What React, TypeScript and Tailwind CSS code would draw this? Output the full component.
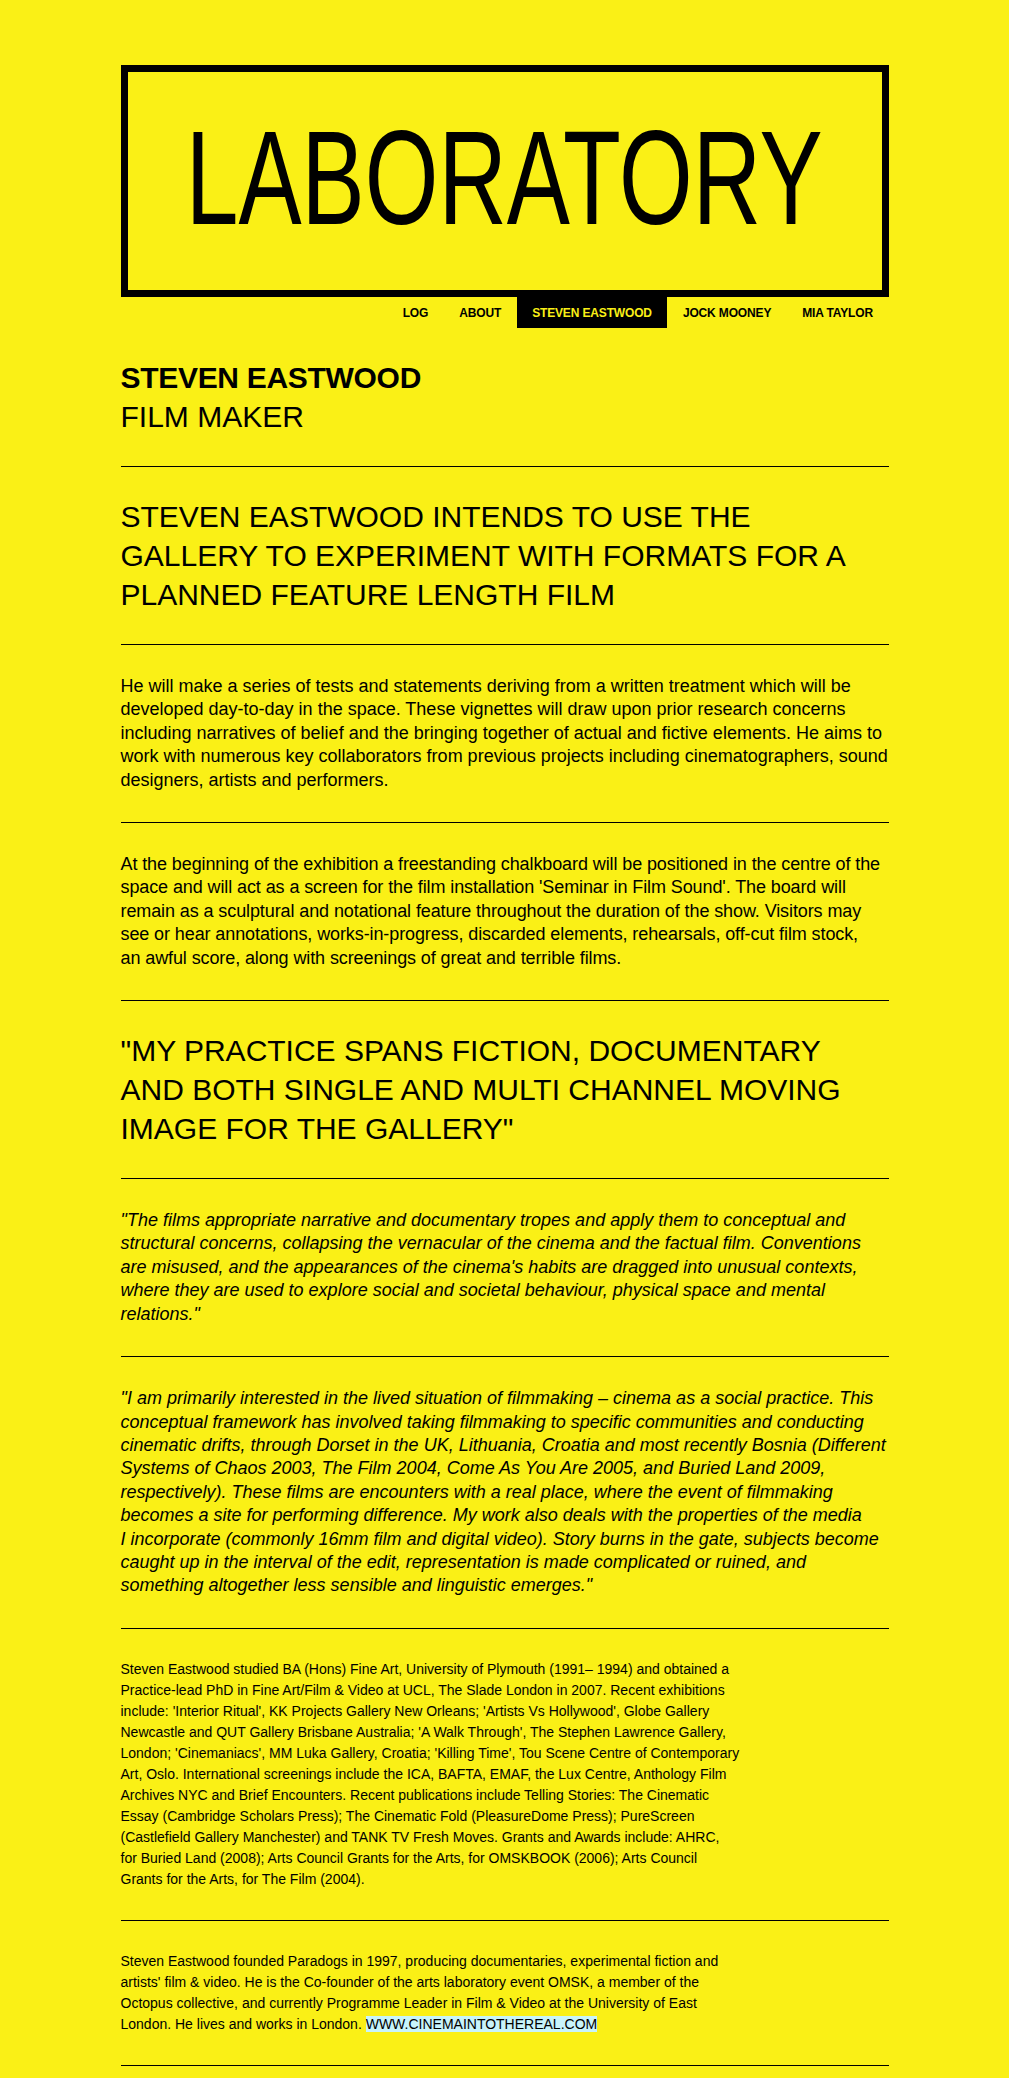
const navItems = ["LOG", "ABOUT", "STEVEN EASTWOOD", "JOCK MOONEY", "MIA TAYLOR"];

const Divider = () => <div className="w-full h-px bg-black" />;

const App = () => {
  return (
    <div className="min-h-[2078px] w-full bg-[#faf016] text-black font-['Liberation_Sans',Arial,sans-serif] pt-[65px] pb-[11px]">
      <div className="w-[768px] mx-auto flex flex-col">
        {/* logo box */}
        <div className="h-[232px] border-[7px] border-black flex items-center justify-center overflow-visible">
          <span className="inline-block text-[133px] leading-none whitespace-nowrap scale-x-[0.712] mt-[-6px]">
            LABORATORY
          </span>
        </div>

        <nav className="flex justify-end">
          {navItems.map((item) => (
            <a
              key={item}
              className={
                item === "STEVEN EASTWOOD"
                  ? "h-[31px] px-[15.5px] flex items-center bg-black text-[#faf016] text-[12px] font-bold tracking-[-0.15px]"
                  : "h-[31px] px-[15.5px] flex items-center text-black text-[12px] font-bold tracking-[-0.15px]"
              }
            >
              {item}
            </a>
          ))}
        </nav>

        <div className="pt-[30px] pb-[30px]">
          <h1 className="text-[30px] leading-[39px] font-bold tracking-[-0.3px]">STEVEN EASTWOOD</h1>
          <h2 className="text-[30px] leading-[39px] font-normal">FILM MAKER</h2>
        </div>

        <Divider />
        <div className="py-[30px]">
          <h3 className="text-[30px] leading-[39px]">
            STEVEN EASTWOOD INTENDS TO USE THE GALLERY TO EXPERIMENT WITH FORMATS FOR A PLANNED FEATURE LENGTH FILM
          </h3>
        </div>

        <Divider />
        <div className="py-[30px]">
          <p className="text-[18px] leading-[23.4px]">
            He will make a series of tests and statements deriving from a written treatment which will be developed
            day-to-day in the space. These vignettes will draw upon prior research concerns including narratives of
            belief and the bringing together of actual and fictive elements. He aims to work with numerous key
            collaborators from previous projects including cinematographers, sound designers, artists and performers.
          </p>
        </div>

        <Divider />
        <div className="py-[30px]">
          <p className="text-[18px] leading-[23.4px] tracking-[-0.1px]">
            At the beginning of the exhibition a freestanding chalkboard will be positioned in the centre of the space
            and will act as a screen for the film installation 'Seminar in Film Sound'. The board will remain as a
            sculptural and notational feature throughout the duration of the show. Visitors may see or hear
            annotations, works-in-progress, discarded elements, rehearsals, off-cut film stock,
            <br />
            an awful score, along with screenings of great and terrible films.
          </p>
        </div>

        <Divider />
        <div className="py-[30px]">
          <h3 className="text-[30px] leading-[39px]">
            "MY PRACTICE SPANS FICTION, DOCUMENTARY AND BOTH SINGLE AND MULTI CHANNEL MOVING IMAGE FOR THE GALLERY"
          </h3>
        </div>

        <Divider />
        <div className="py-[30px]">
          <p className="text-[18px] leading-[23.4px] italic">
            "The films appropriate narrative and documentary tropes and apply them to conceptual and structural
            concerns, collapsing the vernacular of the cinema and the factual film. Conventions are misused, and the
            appearances of the cinema's habits are dragged into unusual contexts, where they are used to explore social
            and societal behaviour, physical space and mental relations."
          </p>
        </div>

        <Divider />
        <div className="py-[30px]">
          <p className="text-[18px] leading-[23.4px] italic">
            "I am primarily interested in the lived situation of filmmaking – cinema as a social practice. This
            conceptual framework has involved taking filmmaking to specific communities and conducting cinematic
            drifts, through Dorset in the UK, Lithuania, Croatia and most recently Bosnia (Different Systems of Chaos
            2003, The Film 2004, Come As You Are 2005, and Buried Land 2009, respectively). These films are encounters
            with a real place, where the event of filmmaking becomes a site for performing difference. My work also
            deals with the properties of the media
            <br />I incorporate (commonly 16mm film and digital video). Story burns in the gate, subjects become caught
            up in the interval of the edit, representation is made complicated or ruined, and something altogether less
            sensible and linguistic emerges."
          </p>
        </div>

        <Divider />
        <div className="py-[30px]">
          <p className="max-w-[630px] text-[14px] leading-[21px]">
            Steven Eastwood studied BA (Hons) Fine Art, University of Plymouth (1991– 1994) and obtained a
            Practice-lead PhD in Fine Art/Film &amp; Video at UCL, The Slade London in 2007. Recent exhibitions include:
            'Interior Ritual', KK Projects Gallery New Orleans; 'Artists Vs Hollywood', Globe Gallery Newcastle and QUT
            Gallery Brisbane Australia; 'A Walk Through', The Stephen Lawrence Gallery, London; 'Cinemaniacs', MM Luka
            Gallery, Croatia; 'Killing Time', Tou Scene Centre of Contemporary Art, Oslo. International screenings
            include the ICA, BAFTA, EMAF, the Lux Centre, Anthology Film Archives NYC and Brief Encounters. Recent
            publications include Telling Stories: The Cinematic Essay (Cambridge Scholars Press); The Cinematic Fold
            (PleasureDome Press); PureScreen (Castlefield Gallery Manchester) and TANK TV Fresh Moves. Grants and Awards
            include: AHRC,
            <br />
            for Buried Land (2008); Arts Council Grants for the Arts, for OMSKBOOK (2006); Arts Council
            <br />
            Grants for the Arts, for The Film (2004).
          </p>
        </div>

        <Divider />
        <div className="py-[30px]">
          <p className="max-w-[630px] text-[14px] leading-[21px]">
            Steven Eastwood founded Paradogs in 1997, producing documentaries, experimental fiction and artists' film
            &amp; video. He is the Co-founder of the arts laboratory event OMSK, a member of the Octopus collective, and
            currently Programme Leader in Film &amp; Video at the University of East London. He lives and works in
            London. <a className="bg-[#c8f4fb] text-black">WWW.CINEMAINTOTHEREAL.COM</a>
          </p>
        </div>
        <Divider />
      </div>
    </div>
  );
};

export default App;
